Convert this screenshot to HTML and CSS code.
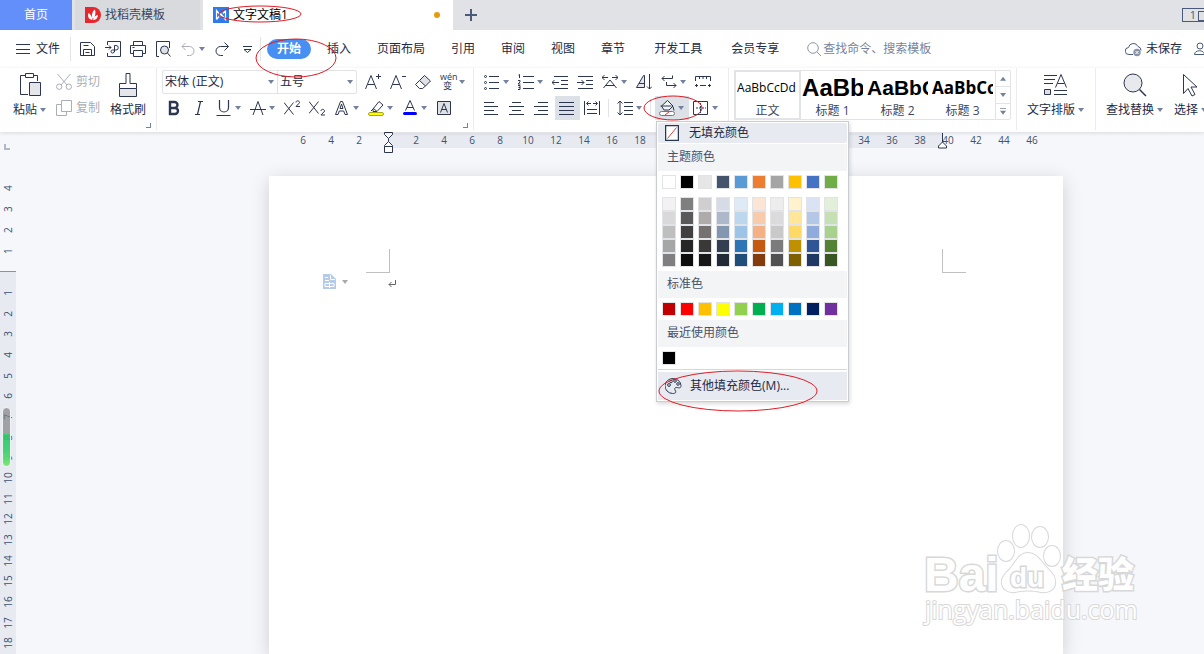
FILE: index.html
```html
<!DOCTYPE html>
<html lang="zh-CN">
<head>
    <meta charset="UTF-8">
    <meta name="viewport" content="width=device-width, initial-scale=1.0">
    <title>文字文稿1</title>
    <link rel="stylesheet" href="styles.css">
</head>
<body>
    <div class="tabbar">
        <button class="tab tab-home">首页</button>
        <button class="tab tab-template">
            <svg width="16" height="16" viewBox="0 0 16 16" stroke="none"><path d="M0 0h8a8 8 0 0 1 0 16H0z" fill="#e8262d"/><path d="M7.400 13C3 12 2.500 9 3.500 6c2 1 3.500 3 3.900 7zM7.700 12C6 8 7.500 4 10 2.500c1 4 .5 7-2.300 9.500zM8 13c.5-3 2.500-4.500 5-5-.2 3-2 5-5 5z" fill="#fff"/></svg>
            找稻壳模板
        </button>
        <button class="tab tab-active">
            <svg width="16" height="16" viewBox="0 0 16 16" stroke="none"><path d="M0 0h16v16H0z" fill="#2f7bea"/><path d="M3.500 12.500v-9l5 6M8.500 7v3M12.500 3.500v9l-5-6M3.500 12.500L6 9.500M12.500 3.500L10 6.500" fill="none" stroke="#fff" stroke-width="1.200"/></svg>
            文字文稿1
            <span class="unsaved-dot"></span>
        </button>
        <button class="tab-add" aria-label="新建"><svg width="12" height="12" viewBox="0 0 12 12"><path d="M6 0v12M0 6h12" stroke="#4a5a78" stroke-width="2"/></svg></button>
        <button class="tab-count">1<span></span></button>
    </div>

    <div class="menubar">
        <button class="file-btn">
            <svg width="14" height="16" viewBox="0 0 14 16"><path d="M0 3.500h14M0 8.500h14M0 12.500h14"/></svg>
            文件
        </button>
        <div class="quick">
            <button class="tool" aria-label="保存"><svg width="16" height="16" viewBox="0 0 16 16"><path d="M.5 1.500h10l4 4v9H.500zM3.500 14.500v-6h8v6M3.500 4.500h5M5.500 11.500h4"/></svg></button>
            <button class="tool" aria-label="输出为PDF"><svg width="16" height="16" viewBox="0 0 16 16"><path d="M2.500 4V.5h13v15h-13V12M0 6.500h6M4 4.500l2 2-2 2M9.500 11V4.500H11a2 2 0 0 1 0 4.500H7.500a1.500 1.500 0 0 0 0 3q2 0 2-2"/></svg></button>
            <button class="tool" aria-label="打印"><svg width="16" height="16" viewBox="0 0 16 16"><path d="M3.500 4.500v-4h9v4M3.500 12.500h-3v-8h15v8h-3M3.500 9.500h9v6h-9zM2.500 6.500h2"/></svg></button>
            <button class="tool" aria-label="打印预览"><svg width="16" height="16" viewBox="0 0 16 16"><path d="M4 15.500H1.500V.5h13V7"/><circle cx="9.500" cy="9" r="4" fill="#dfe1e6"/><path d="M12.500 12l3 3.500"/></svg></button>
            <button class="tool" aria-label="撤销"><svg class="muted" width="16" height="16" viewBox="0 0 16 16"><path d="M5.500 2L2 5.500 5.500 9M2 5.500h7.500a4.500 4.500 0 0 1 0 9H7"/></svg><span class="caret"></span></button>
            <button class="tool" aria-label="恢复"><svg width="16" height="16" viewBox="0 0 16 16"><path d="M10.500 1.500l4 4-4 4M14.500 5.500H6.500a4.500 4.500 0 0 0 0 9H9"/></svg></button>
            <button class="tool" aria-label="自定义"><svg width="16" height="16" viewBox="0 0 16 16"><path d="M4 5.500h9M5 8.500l3.500 3 3.500-3z"/></svg></button>
        </div>
        <nav class="nav">
            <a href="#" class="current">开始</a>
            <a href="#">插入</a>
            <a href="#">页面布局</a>
            <a href="#">引用</a>
            <a href="#">审阅</a>
            <a href="#">视图</a>
            <a href="#">章节</a>
            <a href="#" class="nav-extra">开发工具</a>
            <a href="#" class="nav-extra">会员专享</a>
        </nav>
        <label class="search">
            <svg width="14" height="16" viewBox="0 0 14 16"><circle cx="6" cy="7" r="5.300"/><path d="M10 11l4 4"/></svg>
            <input type="text" placeholder="查找命令、搜索模板" aria-label="查找命令">
        </label>
        <button class="cloud-btn">
            <svg width="17" height="16" viewBox="0 0 17 16"><path d="M8 13.500H4a3.500 3.500 0 0 1-.5-7 5 5 0 0 1 9.500-1 4 4 0 0 1 3 4"/><circle cx="12" cy="11.500" r="3.700" fill="#8a94a8" stroke="none"/><path d="M10.500 10l3 3m0-3l-3 3" stroke="#fff"/></svg>
            未保存
        </button>
        <button class="share-btn" aria-label="协作"><svg width="16" height="16" viewBox="0 0 16 16"><circle cx="6" cy="5" r="3"/><path d="M.5 13.500c0-5 10-5 10 0zM10 2.500a3 3 0 0 1 1 5.500"/></svg></button>
    </div>

    <div class="ribbon">
        <div class="group group-clip">
            <button class="big">
                <svg width="24" height="26" viewBox="0 0 24 26"><path d="M7 3.500H2.500v19H10M16 3.500h3.500V9M7.500 1.500h8v4h-8z"/><path d="M11.500 10.500h11v13h-11z" fill="#e4e6ea"/></svg>
                <span>粘贴<i class="caret"></i></span>
            </button>
            <div class="rows">
                <button class="mini"><svg width="16" height="16" viewBox="0 0 16 16"><path d="M1.500 0L11 11M14.500 0L5 11"/><circle cx="3.200" cy="12.700" r="2.700"/><circle cx="12.800" cy="12.700" r="2.700"/></svg>剪切</button>
                <button class="mini"><svg width="16" height="16" viewBox="0 0 16 16"><path d="M5.500.5h10v11h-10zM5 4.500H.5v11h10V12"/></svg>复制</button>
            </div>
            <button class="big">
                <svg width="24" height="26" viewBox="0 0 24 26"><path d="M3.500 16.500v-5H10v-10h4v10h6.500v5"/><path d="M3.500 16.500h17v8h-17z" fill="#e4e6ea"/></svg>
                <span>格式刷</span>
            </button>
            <i class="corner"></i>
        </div>

        <div class="group group-font">
            <div class="rows">
                <div class="row">
                    <div class="combos">
                        <div class="combo combo-font"><select aria-label="字体"><option>宋体 (正文)</option></select><i class="caret"></i></div>
                        <div class="combo combo-size"><select aria-label="字号"><option>五号</option></select><i class="caret"></i></div>
                    </div>
                    <button class="tool" aria-label="增大字号"><svg width="16" height="16" viewBox="0 0 16 16"><path d="M.5 15L6 1.500 11.500 15M2.500 10.500h7M13.500 0v5M11 2.500h5"/></svg></button>
                    <button class="tool" aria-label="减小字号"><svg width="16" height="16" viewBox="0 0 16 16"><path d="M.5 15L6 1.500 11.500 15M2.500 10.500h7M12 2.500h4"/></svg></button>
                    <button class="tool" aria-label="清除格式"><svg width="16" height="16" viewBox="0 0 16 16"><path d="M9.500 1.500l6 5.500-5 5-6-5.500z" fill="#dfe1e6"/><path d="M4.500 6.500L.5 10.500l4 4h3l3-2.500"/></svg></button>
                    <button class="tool" aria-label="拼音指南"><svg class="pinyin" width="16" height="16" viewBox="0 0 16 16"><text x="0" y="6">wén</text><text x="3" y="15">变</text></svg><span class="caret"></span></button>
                </div>
                <div class="row">
                    <button class="tool" aria-label="加粗"><svg width="16" height="16" viewBox="0 0 16 16"><path d="M4 2h4.500a3 3 0 0 1 0 6H4zM4 8h5a3 3 0 0 1 0 6H4z" stroke-width="2.400"/></svg></button>
                    <button class="tool" aria-label="倾斜"><svg width="16" height="16" viewBox="0 0 16 16"><path d="M7 1.500h5M4 14.500h5M9.500 1.500l-3 13" stroke-width="1.200"/></svg></button>
                    <button class="tool" aria-label="下划线"><svg width="16" height="16" viewBox="0 0 16 16"><path d="M3.500 0v7.500a4.500 4.500 0 0 0 9 0V0M.5 15.500h14" stroke-width="1.200"/></svg><span class="caret"></span></button>
                    <button class="tool" aria-label="删除线"><svg width="16" height="16" viewBox="0 0 16 16"><path d="M3 15L8 1.500 13 15M0 9.500h16"/></svg><span class="caret"></span></button>
                    <button class="tool" aria-label="上标"><svg width="16" height="16" viewBox="0 0 16 16"><path d="M0 2.500L9.500 14.500M9.500 2.500L0 14.500M12 2.500c0-2.500 3.500-2 3.500 0 0 1.500-2.500 2-3.500 4H16"/></svg></button>
                    <button class="tool" aria-label="下标"><svg width="16" height="16" viewBox="0 0 16 16"><path d="M0 1.500L9.500 13.500M9.500 1.500L0 13.500M12 11c0-2.500 3.500-2 3.500 0 0 1.500-2.500 2-3.500 4H16"/></svg></button>
                    <button class="tool" aria-label="文字效果"><svg width="16" height="16" viewBox="0 0 16 16"><path d="M1.500 14.500l5-13h2l5 13H11L9.700 11H5.300L4 14.500zM6 8.500h3L7.500 4z"/></svg><span class="caret"></span></button>
                    <button class="tool" aria-label="突出显示"><svg width="16" height="16" viewBox="0 0 16 16"><path d="M5 9l6-7.500 4 3.500-6 6.500H5zM5 8l4 3.500M3 11l2-2" fill="#fff"/><rect x=".5" y="12.500" width="15" height="3" rx="1.500" fill="#ff0" stroke="#a6a620"/></svg><span class="caret"></span></button>
                    <button class="tool" aria-label="字体颜色"><svg width="16" height="16" viewBox="0 0 16 16"><path d="M3.500 10.500l4.500-10 4.500 10M5 7.500h6"/><rect x="1" y="12" width="14" height="3" rx="1.500" fill="#00f" stroke="none"/></svg><span class="caret"></span></button>
                    <button class="tool" aria-label="字符底纹"><svg width="16" height="16" viewBox="0 0 16 16"><path d="M1.500 1.500h13v13h-13z" fill="#dfe1e6"/><path d="M4.500 12.500l3.500-9 3.500 9M5.500 9.500h5"/></svg></button>
                </div>
            </div>
            <i class="corner"></i>
        </div>

        <div class="group group-para">
            <div class="rows">
                <div class="row">
                    <button class="tool" aria-label="项目符号"><svg width="16" height="16" viewBox="0 0 16 16"><path d="M5 2.500h10M5 8.500h10M5 14.500h10"/><circle cx="1.500" cy="2.500" r="1"/><circle cx="1.500" cy="8.500" r="1"/><circle cx="1.500" cy="14.500" r="1"/></svg><span class="caret"></span></button>
                    <button class="tool" aria-label="编号"><svg width="16" height="16" viewBox="0 0 16 16"><path d="M5 2.500h11M5 8.500h11M5 14.500h11M.5 1l1-.5V4M0 6.500h2v1.500l-2 2h2.500M0 11.500h2v4H0M.5 13.500H2"/></svg><span class="caret"></span></button>
                    <button class="tool" aria-label="减少缩进"><svg width="16" height="16" viewBox="0 0 16 16"><path d="M2 2.500h14M9 6.500h7M9 10.500h7M2 14.500h14M0 8.500h7M2.500 6L0 8.500 2.500 11"/></svg></button>
                    <button class="tool" aria-label="增加缩进"><svg width="16" height="16" viewBox="0 0 16 16"><path d="M1 2.500h15M9 6.500h7M9 10.500h7M1 14.500h15M0 8.500h7M4.500 6L7 8.500 4.500 11"/></svg></button>
                    <button class="tool" aria-label="中文版式"><svg width="16" height="16" viewBox="0 0 16 16"><path d="M1.500 14L8 6l6.500 8M4 11.500h8M0 3.500h6M2.500 1L0 3.500 2.500 6M10 3.500h6M13.500 1L16 3.500 13.500 6"/></svg><span class="caret"></span></button>
                    <button class="tool" aria-label="排序"><svg width="16" height="16" viewBox="0 0 16 16"><path d="M.5 13.500l7-12h1v12zM3 9.500h5.500" fill="#e4e6ea"/><path d="M13.500 0v15M11 12.500l2.500 2.500 2.500-2.500"/></svg></button>
                    <button class="tool" aria-label="换行"><svg width="16" height="16" viewBox="0 0 16 16"><path d="M11.500 1.500v3H1M3.500 2L1 4.500 3.500 7M5.500 8v3.500H15M12.500 9l2.500 2.500-2.500 2.500"/></svg><span class="caret"></span></button>
                    <button class="tool" aria-label="标尺"><svg width="16" height="16" viewBox="0 0 16 16"><path d="M.5 7V2.500h15V7M4.500 2.500V5M8 2.500V5M11.500 2.500V5M0 11.500h3M5 11.500h6M13 11.500h3M1.500 10v3M14.500 10v3"/></svg></button>
                </div>
                <div class="row">
                    <button class="tool" aria-label="左对齐"><svg width="16" height="16" viewBox="0 0 16 16"><path d="M0 2.500h10M0 6.500h14M0 10.500h10M0 14.500h14"/></svg></button>
                    <button class="tool" aria-label="居中"><svg width="16" height="16" viewBox="0 0 16 16"><path d="M3 2.500h9M0 6.500h15M3 10.500h9M0 14.500h15"/></svg></button>
                    <button class="tool" aria-label="右对齐"><svg width="16" height="16" viewBox="0 0 16 16"><path d="M4 2.500h10M0 6.500h14M4 10.500h10M0 14.500h14"/></svg></button>
                    <button class="tool pressed" aria-label="两端对齐"><svg width="16" height="16" viewBox="0 0 16 16"><path d="M0 2.500h15M0 6.500h15M0 10.500h15M0 14.500h15"/></svg></button>
                    <button class="tool" aria-label="分散对齐"><svg width="16" height="16" viewBox="0 0 16 16"><path d="M.5 1v14M15.500 1v14M3 3.500h4M9 3.500h4M4.500 1.500l-2 2 2 2M11.500 1.500l2 2-2 2M3 9.500h10M3 13.500h10"/></svg></button>
                    <i class="divider"></i>
                    <button class="tool" aria-label="行距"><svg width="16" height="16" viewBox="0 0 16 16"><path d="M3 1v14M.5 3.500L3 1l2.500 2.500M.5 12.500L3 15l2.500-2.500M7 2.500h9M7 6.500h9M7 10.500h9M7 14.500h9"/></svg><span class="caret"></span></button>
                    <i class="divider"></i>
                    <div class="fill-wrap">
                        <button class="tool pressed" aria-label="底纹颜色"><svg width="16" height="16" viewBox="0 0 16 16"><path d="M2.500 6l6-5.500 5.500 5.500-4 4H5z" fill="#f4f5f7"/><path d="M1.500 6h11M14 6.500l1 4"/><rect x=".5" y="11.500" width="15" height="4" rx="2" fill="#fff" stroke="#777"/><path d="M6 15l4-3" stroke="#e33"/></svg><span class="caret"></span></button>
                        <div class="color-menu">
                            <button class="menu-item no-fill"><svg width="14" height="16" viewBox="0 0 14 16"><path d="M.5.5h13v15H.5z" fill="#fff" stroke-width="1.500"/><path d="M2.500 13.500l9-11" stroke="#e04040"/></svg>无填充颜色</button>
                            <h4>主题颜色</h4>
                            <div class="swatches">
                                <button style="background:#ffffff"></button><button style="background:#000000"></button><button style="background:#e7e6e6"></button><button style="background:#44546a"></button><button style="background:#5b9bd5"></button><button style="background:#ed7d31"></button><button style="background:#a5a5a5"></button><button style="background:#ffc000"></button><button style="background:#4472c4"></button><button style="background:#70ad47"></button>
                            </div>
                            <div class="swatches shades">
                                <button style="background:#f2f2f2"></button><button style="background:#7f7f7f"></button><button style="background:#d0cece"></button><button style="background:#d6dce5"></button><button style="background:#deebf6"></button><button style="background:#fbe5d6"></button><button style="background:#ededed"></button><button style="background:#fff2cc"></button><button style="background:#dae3f3"></button><button style="background:#e2f0d9"></button>
                                <button style="background:#d9d9d9"></button><button style="background:#595959"></button><button style="background:#afabab"></button><button style="background:#adb9ca"></button><button style="background:#bdd7ee"></button><button style="background:#f8cbad"></button><button style="background:#dbdbdb"></button><button style="background:#ffe699"></button><button style="background:#b4c7e7"></button><button style="background:#c5e0b4"></button>
                                <button style="background:#bfbfbf"></button><button style="background:#404040"></button><button style="background:#767171"></button><button style="background:#8497b0"></button><button style="background:#9dc3e6"></button><button style="background:#f4b183"></button><button style="background:#c9c9c9"></button><button style="background:#ffd966"></button><button style="background:#8faadc"></button><button style="background:#a9d18e"></button>
                                <button style="background:#a6a6a6"></button><button style="background:#262626"></button><button style="background:#3b3838"></button><button style="background:#333f50"></button><button style="background:#2e75b6"></button><button style="background:#c55a11"></button><button style="background:#7b7b7b"></button><button style="background:#bf9000"></button><button style="background:#2f5597"></button><button style="background:#548235"></button>
                                <button style="background:#7f7f7f"></button><button style="background:#0d0d0d"></button><button style="background:#181717"></button><button style="background:#222a35"></button><button style="background:#1f4e79"></button><button style="background:#843c0c"></button><button style="background:#525252"></button><button style="background:#7f6000"></button><button style="background:#203864"></button><button style="background:#385723"></button>
                            </div>
                            <h4>标准色</h4>
                            <div class="swatches">
                                <button style="background:#c00000"></button><button style="background:#ff0000"></button><button style="background:#ffc000"></button><button style="background:#ffff00"></button><button style="background:#92d050"></button><button style="background:#00b050"></button><button style="background:#00b0f0"></button><button style="background:#0070c0"></button><button style="background:#002060"></button><button style="background:#7030a0"></button>
                            </div>
                            <h4>最近使用颜色</h4>
                            <div class="swatches"><button style="background:#000000"></button></div>
                            <button class="menu-item more-colors"><svg width="17" height="16" viewBox="0 0 17 16"><path d="M8.500.5a8 7.500 0 0 1 7.500 7c0 3-2 2.500-4 2s-3 1-1.500 3.500c1 2-1 2.500-3 2.500A8 7.500 0 0 1 8.500.500z"/><circle cx="4" cy="7" r="1.400"/><circle cx="6" cy="3.500" r="1.300"/><circle cx="10" cy="3" r="1.300"/><circle cx="13" cy="6" r="1.300"/></svg>其他填充颜色(M)...</button>
                        </div>
                    </div>
                    <button class="tool" aria-label="边框"><svg width="16" height="16" viewBox="0 0 16 16"><path d="M.5 1.500h14v13H.5z"/><path d="M7.500 3v10M3 8h10" stroke-dasharray="2 1"/></svg><span class="caret"></span></button>
                </div>
            </div>
        </div>

        <div class="group group-style">
            <div class="gallery">
                <button class="style-item selected"><span class="sample sample-body">AaBbCcDd</span><span>正文</span></button>
                <button class="style-item"><span class="sample sample-h1">AaBb</span><span>标题 1</span></button>
                <button class="style-item"><span class="sample sample-h2">AaBbC</span><span>标题 2</span></button>
                <button class="style-item"><span class="sample sample-h3">AaBbCc</span><span>标题 3</span></button>
                <div class="gallery-nav">
                    <button aria-label="上一行"><i class="caret up"></i></button>
                    <button aria-label="下一行"><i class="caret"></i></button>
                    <button aria-label="更多样式"><i class="caret more"></i></button>
                </div>
            </div>
        </div>

        <div class="group group-end">
            <button class="big">
                <svg width="24" height="26" viewBox="0 0 24 26"><path d="M0 3.500h13M0 7.500h11M0 11.500h9M11.500 15.500l5.500-13 5.500 13M13.500 11.500h7M10 18.500h13M10 22.500h13"/><path d="M.5 17.500h6v5h-6z" fill="#dfe1e6"/></svg>
                <span>文字排版<i class="caret"></i></span>
            </button>
        </div>
        <div class="group group-end">
            <button class="big">
                <svg width="24" height="26" viewBox="0 0 24 26"><circle cx="10" cy="11" r="9" fill="#e8e9ec"/><path d="M16.500 17.500l6.500 6.500" stroke-width="1.500"/></svg>
                <span>查找替换<i class="caret"></i></span>
            </button>
            <button class="big">
                <svg width="24" height="26" viewBox="0 0 24 26"><path d="M4.500 2.500v19l4.500-5 4 7.500 3-1.500-4-7.500h6z"/></svg>
                <span>选择<i class="caret"></i></span>
            </button>
        </div>
    </div>

    <div class="workspace">
        <div class="vruler">
            <div class="vruler-top">
                <i class="tab-stop"></i>
                <span>4</span><span>3</span><span>2</span><span>1</span>
            </div>
            <div class="vruler-body">
                <span>1</span><span>2</span><span>3</span><span>4</span><span>5</span><span>6</span><span>7</span><span>8</span><span>9</span><span>10</span><span>11</span><span>12</span><span>13</span><span>14</span><span>15</span><span>16</span><span>17</span><span>18</span>
                <i class="meter"></i>
            </div>
        </div>
        <div class="canvas">
            <div class="hruler">
                <div class="hruler-out"><span>6</span><span>4</span><span>2</span></div>
                <div class="hruler-in">
                    <svg class="indent-left" width="10" height="22" viewBox="0 0 10 22"><path d="M.5.5h8v2l-4 4-4-4zM4.500 6.500v3l-4 4v1h8v-1l-4-4M.5 14.500h8v6h-8z" fill="#fff"/></svg>
                    <span>2</span><span>4</span><span>6</span><span>8</span><span>10</span><span>12</span><span>14</span><span>16</span><span>18</span><span></span><span></span><span></span><span></span><span></span><span></span><span></span><span>34</span><span>36</span><span>38</span><span>40</span><span>42</span><span>44</span><span>46</span>
                    <svg class="indent-right" width="10" height="16" viewBox="0 0 10 16"><path d="M4.500 0v9l-4 4v2h8v-2l-4-4" fill="#fff"/></svg>
                </div>
            </div>
            <div class="page">
                <div class="crop-marks"><i></i><i></i></div>
                <div class="first-line">
                    <svg width="13" height="16" viewBox="0 0 13 16"><path d="M0 0h8l5 5v10H0z" fill="#b4cbea" stroke="none"/><path d="M7.500 1v4.500H12M2 3.500h3M2 6.500h4M2 9.500h9v3H2zM6.500 8v6" stroke="#fff"/></svg>
                    <i class="caret"></i>
                    <svg class="return-mark" width="8" height="8" viewBox="0 0 8 8"><path d="M7.500 0v4.500H1M3.500 2L1 4.500 3.500 7"/></svg>
                </div>
            </div>
        </div>
    </div>

    <svg class="watermark" width="230" height="110" viewBox="0 0 230 110">
        <g class="paw">
            <ellipse cx="84" cy="31" rx="8" ry="10"/>
            <ellipse cx="99" cy="16" rx="8" ry="11"/>
            <ellipse cx="118" cy="17" rx="8" ry="10"/>
            <ellipse cx="130" cy="36" rx="8" ry="10"/>
            <path d="M106 33c9 0 13 9 20 16 6 6 8 10 7 15-1 6-7 9-14 8-9-2-17-2-26 0-7 1-12-3-13-8-1-6 3-10 8-15 6-7 9-16 18-16z"/>
        </g>
        <text class="wm-name" x="2" y="71">Bai</text>
        <text class="wm-du" x="88" y="67">du</text>
        <text class="wm-cn" x="140" y="68">经验</text>
        <text class="wm-url" x="3" y="99">jingyan.baidu.com</text>
    </svg>

    <svg class="marks" width="1204" height="654" viewBox="0 0 1204 654">
        <ellipse cx="260" cy="14" rx="41" ry="8"/>
        <ellipse cx="296" cy="58" rx="40" ry="19"/>
        <ellipse cx="673" cy="108" rx="29" ry="12"/>
        <ellipse cx="738" cy="391" rx="79" ry="20"/>
    </svg>
</body>
</html>
```
FILE: styles.css
```css
* {
    margin: 0;
    padding: 0;
    box-sizing: border-box;
}

body {
    position: relative;
    display: flex;
    flex-direction: column;
    height: 100vh;
    overflow: hidden;
    background: #f5f7fa;
    color: #222b45;
    font-family: "Open Sans", "Noto Sans CJK SC", sans-serif;
    font-size: 12px;
    line-height: 16px;
}

button,
input,
select {
    border: none;
    background: none;
    color: inherit;
    font: inherit;
}

a {
    color: inherit;
    text-decoration: none;
}

svg {
    display: block;
    flex: none;
    fill: none;
    stroke: #2d3650;
}

svg[stroke="none"] {
    stroke: none;
}

.caret {
    display: block;
    flex: none;
    width: 6px;
    height: 4px;
    background: #74829c;
    clip-path: polygon(0 0, 100% 0, 50% 100%);
}

/* tabs */
.tabbar {
    display: flex;
    height: 30px;
    flex: none;
    background: #e1e2e6;
}

.tab {
    display: flex;
    align-items: center;
    gap: 4px;
    padding: 0 10px;
}

.tab-home {
    width: 72px;
    margin-right: 3px;
    justify-content: center;
    background: #628ffa;
    color: #fff;
}

.tab-template {
    width: 125px;
    margin-right: 3px;
    background: #d8dade;
    color: #3c465c;
}

.tab-active {
    width: 250px;
    background: #fff;
    color: #000;
}

.unsaved-dot {
    width: 6px;
    height: 6px;
    margin-left: auto;
    margin-right: 3px;
    border-radius: 50%;
    background: #e79a0c;
}

.tab-add {
    padding: 0 12px;
}

.tab-count {
    display: flex;
    justify-content: flex-end;
    align-self: center;
    width: 22px;
    height: 14px;
    margin-left: auto;
    border: 1px solid #4a5a78;
    border-right: none;
    color: #4a5a78;
    font-size: 11px;
    line-height: 12px;
}

.tab-count span {
    width: 6px;
    height: 10px;
    margin: 2px 0 0 2px;
    border: 1px solid #4a5a78;
    border-right: none;
}

/* menu bar */
.menubar {
    display: flex;
    align-items: center;
    height: 38px;
    flex: none;
    padding-left: 16px;
    background: #fff;
}

.file-btn {
    display: flex;
    align-items: center;
    gap: 6px;
}

.quick {
    display: flex;
    align-items: center;
    margin-left: 10px;
    padding-left: 5px;
    border-left: 1px solid #e2e3e7;
    border-right: 1px solid #e2e3e7;
}

.quick .muted {
    stroke: #a9aeb8;
}

.nav {
    display: flex;
    gap: 6px;
    margin-left: 6px;
}

.nav a {
    height: 20px;
    padding: 0 10px;
    border-radius: 10px;
    line-height: 20px;
    white-space: nowrap;
}

.nav .current {
    background: #478ff2;
    color: #fff;
    font-weight: bold;
}

.nav .nav-extra {
    margin-left: 3px;
}

.search {
    display: flex;
    align-items: center;
    gap: 2px;
    margin-left: 18px;
}

.search svg {
    stroke: #8d98ad;
}

.search input {
    width: 130px;
    outline: none;
}

.search input::placeholder {
    color: #77839c;
    opacity: 1;
}

.cloud-btn {
    display: flex;
    align-items: center;
    gap: 4px;
    margin-left: auto;
    white-space: nowrap;
}

.share-btn {
    margin-left: 12px;
    margin-right: -6px;
}

.cloud-btn svg,
.share-btn svg {
    stroke: #4a5a78;
}

/* ribbon */
.ribbon {
    position: relative;
    z-index: 2;
    display: flex;
    height: 64px;
    flex: none;
    background: #fff;
    box-shadow: 0 1px 4px rgba(0, 0, 0, 0.12);
}

.group {
    position: relative;
    display: flex;
    flex: none;
    height: 62px;
    padding-top: 2px;
    border-right: 1px solid #ebecef;
}

.group-clip {
    gap: 10px;
    padding-left: 13px;
    padding-right: 10px;
}

.group-font {
    padding-left: 5px;
    padding-right: 3px;
}

.group-para {
    padding-left: 6px;
    padding-right: 5px;
}

.group-style {
    padding-left: 5px;
    padding-right: 5px;
}

.group-end {
    gap: 11px;
    padding-left: 10px;
    padding-right: 11px;
}

.group-end:last-child {
    border-right: none;
}

.rows {
    display: flex;
    flex-direction: column;
    gap: 2px;
}

.row {
    display: flex;
    height: 24px;
}

.corner {
    position: absolute;
    right: 5px;
    bottom: 2px;
    width: 5px;
    height: 5px;
    border-right: 1px solid #74829c;
    border-bottom: 1px solid #74829c;
}

.big {
    display: flex;
    flex-direction: column;
    align-items: center;
    height: 50px;
    padding-top: 2px;
    gap: 4px;
    white-space: nowrap;
}

.big span {
    display: flex;
    align-items: center;
    gap: 3px;
}

.mini {
    display: flex;
    align-items: center;
    gap: 4px;
    height: 24px;
    color: #a9aeb8;
    white-space: nowrap;
}

.mini svg {
    stroke: #a9aeb8;
}

.tool {
    display: flex;
    align-items: center;
    gap: 3px;
    height: 24px;
    padding: 0 5px 0 4px;
}

.tool.pressed {
    background: #dce1e7;
}

.pinyin {
    overflow: visible;
    stroke: none;
    fill: #2d3650;
    font-size: 9px;
}

.divider {
    width: 1px;
    height: 18px;
    margin: 3px 4px 0 3px;
    background: #e2e3e7;
}

.combos {
    display: flex;
    width: 195px;
    margin-right: 4px;
    border: 1px solid #e2e3e7;
    border-radius: 2px;
}

.combo {
    display: flex;
    align-items: center;
    padding: 0 3px 0 2px;
}

.combo select {
    flex: 1;
    min-width: 0;
    appearance: none;
    outline: none;
}

.combo-font {
    width: 115px;
    border-right: 1px solid #e2e3e7;
}

.combo-size {
    flex: 1;
}

/* style gallery */
.gallery {
    display: flex;
    height: 50px;
    border: 1px solid #e2e3e7;
    border-radius: 2px;
}

.style-item {
    display: flex;
    flex-direction: column;
    align-items: center;
    width: 65px;
    padding: 0 2px;
    color: #3c465c;
}

.style-item.selected {
    outline: 2px solid #e2e3e7;
    outline-offset: -1px;
}

.sample {
    width: 100%;
    height: 32px;
    overflow: hidden;
    color: #000;
    line-height: 33px;
    text-align: left;
    white-space: nowrap;
}

.sample-h1 {
    font: bold 24px/33px "Liberation Sans", sans-serif;
}

.sample-h2 {
    font: bold 21px/33px "Liberation Sans", sans-serif;
}

.sample-h3 {
    font-size: 17px;
    font-weight: bold;
}

.gallery-nav {
    display: flex;
    flex-direction: column;
    width: 15px;
    border-left: 1px solid #e2e3e7;
}

.gallery-nav button {
    display: flex;
    flex: 1;
    align-items: center;
    justify-content: center;
}

.gallery-nav button + button {
    border-top: 1px solid #e2e3e7;
}

.caret.up {
    clip-path: polygon(50% 0, 100% 100%, 0 100%);
}

.caret.more {
    height: 7px;
    clip-path: polygon(0 0, 100% 0, 100% 15%, 0 15%, 0 43%, 100% 43%, 50% 100%, 0 43%);
}

/* fill colour menu */
.fill-wrap {
    position: relative;
}

.color-menu {
    position: absolute;
    left: 1px;
    top: 25px;
    width: 193px;
    padding: 1px;
    border: 1px solid #c9ccd2;
    background: #fff;
    box-shadow: 1px 2px 4px rgba(0, 0, 0, 0.15);
}

.menu-item {
    display: flex;
    align-items: center;
    width: 100%;
    padding-left: 7px;
    background: #e7eaf0;
    text-align: left;
}

.no-fill {
    height: 20px;
    gap: 10px;
    border-radius: 2px;
}

.color-menu h4 {
    height: 27px;
    padding-left: 9px;
    background: #f3f4f6;
    color: #46526b;
    font-weight: normal;
    line-height: 26px;
}

.no-fill + h4 {
    margin-top: 1px;
}

.swatches {
    display: grid;
    grid-template-columns: repeat(10, 14px);
    column-gap: 4px;
    padding: 4px;
}

.swatches button {
    height: 14px;
    border: 1px solid #e2e3e6;
}

.more-colors {
    position: relative;
    height: 28px;
    gap: 8px;
    margin-top: 3px;
}

.more-colors::before {
    content: '';
    position: absolute;
    top: -3px;
    left: 0;
    right: 0;
    height: 1px;
    background: #d5d7db;
}

/* workspace */
.workspace {
    display: flex;
    flex: 1;
    min-height: 0;
    padding-top: 1px;
    color: #40506e;
    font-size: 10px;
}

.vruler {
    display: flex;
    flex-direction: column;
    width: 16px;
    flex: none;
}

.vruler span {
    display: flex;
    align-items: center;
    justify-content: center;
    writing-mode: vertical-rl;
    transform: rotate(180deg);
}

.vruler-top {
    padding: 11px 0 9px;
}

.vruler-top span {
    height: 21px;
}

.tab-stop {
    display: block;
    width: 6px;
    height: 6px;
    margin: 0 0 28px 4px;
    border-left: 2px solid #b3b8c4;
    border-bottom: 2px solid #b3b8c4;
}

.vruler-body {
    position: relative;
    display: flex;
    flex: 1;
    flex-direction: column;
    padding-top: 10px;
    border-top: 1px solid #8296a5;
    background: #e7ebf1;
}

.vruler-body span {
    flex: 1;
    min-height: 0;
}

.meter {
    position: absolute;
    left: 2px;
    top: 135px;
    width: 9px;
    height: 60px;
    border: 1px solid #f0f1f3;
    border-radius: 5px;
    background: linear-gradient(rgba(130, 130, 134, 0.7) 44%, rgba(39, 199, 102, 0.9) 44%, rgba(53, 207, 104, 0.9) 75%, #7be878);
}

.canvas {
    display: flex;
    flex: 1;
    flex-direction: column;
    min-width: 0;
}

.hruler {
    display: flex;
    flex: none;
    height: 15px;
    margin-left: 273px;
    margin-bottom: 28px;
}

.hruler span {
    flex: none;
    width: 28px;
    text-align: center;
    line-height: 15px;
}

.hruler-out {
    display: flex;
    padding-right: 15px;
}

.hruler-in {
    position: relative;
    display: flex;
    width: 554px;
    padding-left: 14px;
    background: #e7ebf1;
}

.indent-left {
    position: absolute;
    left: -4px;
    top: -1px;
}

.indent-right {
    position: absolute;
    right: -6px;
    top: 0;
}

.page {
    flex: 1;
    width: 794px;
    margin-left: 253px;
    background: #fff;
    box-shadow: 0 4px 18px rgba(0, 0, 0, 0.16);
}

.crop-marks {
    display: flex;
    align-items: flex-end;
    justify-content: space-between;
    height: 97px;
    padding: 0 97px;
}

.crop-marks i {
    width: 24px;
    height: 24px;
    border-bottom: 1px solid #c0c0c0;
    border-right: 1px solid #c0c0c0;
}

.crop-marks i:last-child {
    border-right: none;
    border-left: 1px solid #c0c0c0;
}

.first-line {
    display: flex;
    align-items: center;
    gap: 6px;
    padding: 1px 0 0 54px;
}

.first-line .caret {
    background: #aaa;
}

.return-mark {
    margin-left: 34px;
    margin-top: 4px;
    stroke: #666;
}

.watermark {
    position: absolute;
    left: 922px;
    top: 520px;
    stroke: #d8d8d8;
    fill: #fff;
    paint-order: stroke;
    stroke-width: 3px;
}

.paw {
    stroke-width: 2px;
}

.wm-name {
    font: bold 48px "Liberation Sans", sans-serif;
}

.wm-du {
    font: bold 28px "Liberation Sans", sans-serif;
}

.wm-cn {
    font: 900 36px "Noto Sans CJK SC", sans-serif;
}

.wm-url {
    font: 25px "Open Sans", sans-serif;
    stroke-width: 2px;
}

/* red circles round each step */
.marks {
    position: absolute;
    left: 0;
    top: 0;
    z-index: 3;
    stroke: #e01b24;
    pointer-events: none;
}
```
